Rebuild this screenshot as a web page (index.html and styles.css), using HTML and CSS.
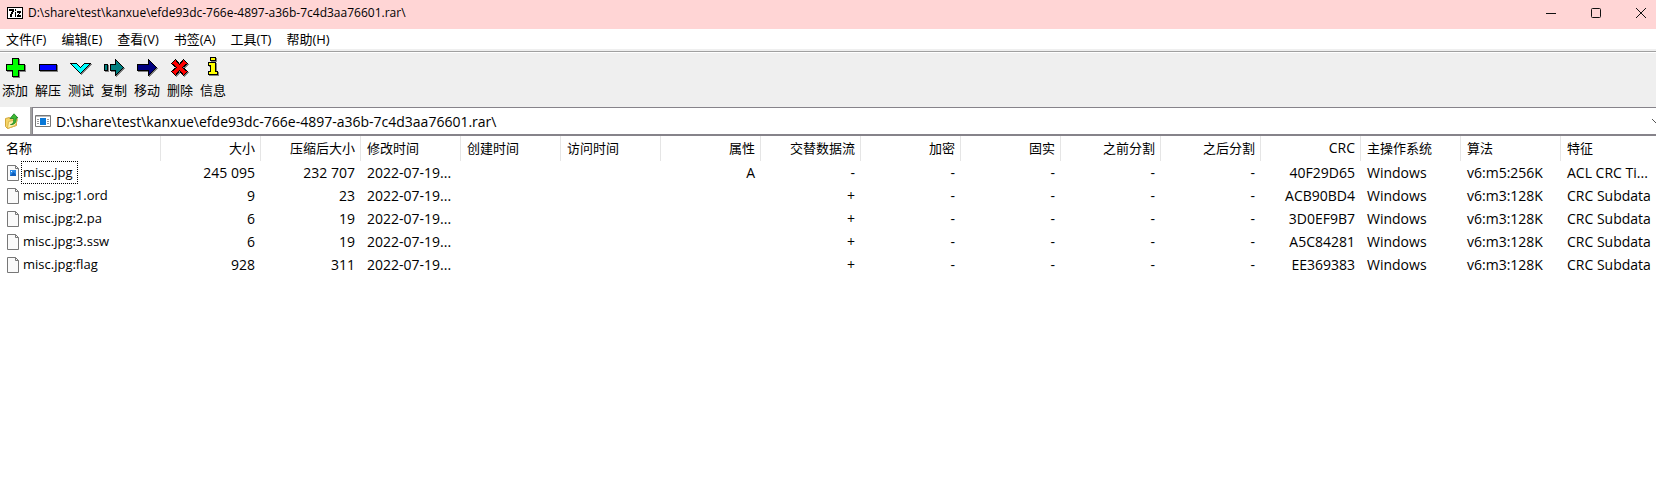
FILE: index.html
```html
<!DOCTYPE html>
<html lang="zh-CN">
<head>
<meta charset="utf-8">
<title>D:\share\test\kanxue\efde93dc-766e-4897-a36b-7c4d3aa76601.rar\</title>
<link rel="stylesheet" href="styles.css">
</head>
<body>
<div class="window">
  <header class="titlebar">
    <svg class="app-icon" viewBox="0 0 16 12" aria-hidden="true">
      <path d="M0 0h16v12H0z"/>
      <path d="M1 1h14v10H1z" fill="#fff"/>
      <path d="M2 2h5v3H6v2H5v3H3V7h1V5h1V4H2zM8 2h1v2H8zM8 5h1v5H8zM10 4h4v2h-1v1h-1v1h2v2h-4V8h1V7h1V6h-2z"/>
    </svg>
    <h1 class="title">D:\share\test\kanxue\efde93dc-766e-4897-a36b-7c4d3aa76601.rar\</h1>
    <div class="window-controls">
      <button class="control" aria-label="最小化"><svg viewBox="0 0 12 12"><path d="M1 6.500h10"/></svg></button>
      <button class="control" aria-label="最大化"><svg viewBox="0 0 12 12"><rect x="1.500" y="1.500" width="9" height="9" rx="1"/></svg></button>
      <button class="control" aria-label="关闭"><svg viewBox="0 0 12 12"><path d="M1 1l10 10M11 1L1 11"/></svg></button>
    </div>
  </header>
  <nav class="menubar">
    <button>文件(F)</button>
    <button>编辑(E)</button>
    <button>查看(V)</button>
    <button>书签(A)</button>
    <button>工具(T)</button>
    <button>帮助(H)</button>
  </nav>
  <div class="toolbar">
    <button><svg viewBox="0 0 24 24"><path class="shade" d="M10.500 3.500h6v6h6v6h-6v6h-6v-6h-6v-6h6z"/><path fill="#0f0" d="M9.500 2.500h6v6h6v6h-6v6h-6v-6h-6v-6h6z"/></svg>添加</button>
    <button><svg viewBox="0 0 24 24"><path class="shade" d="M4.500 9.500h17v6h-17z"/><path fill="#00f" d="M3.500 8.500h17v6h-17z"/></svg>解压</button>
    <button><svg viewBox="0 0 24 24"><path class="shade" d="M2.500 8.500h6l4 4 4-4h6l-10 10z"/><path fill="#0ff" d="M1.500 7.500h6l4 4 4-4h6l-10 10z"/></svg>测试</button>
    <button><svg viewBox="0 0 24 24"><path class="shade" d="M3.500 9.500h3v6h-3zM9.500 9.500h5v-5l8 8-8 8v-5h-5z"/><path fill="#008080" d="M2.500 8.500h3v6h-3zM8.500 8.500h5v-5l8 8-8 8v-5h-5z"/></svg>复制</button>
    <button><svg viewBox="0 0 24 24"><path class="shade" d="M3.500 9.500h11v-5l8 8-8 8v-5h-11z"/><path fill="#000080" d="M2.500 8.500h11v-5l8 8-8 8v-5h-11z"/></svg>移动</button>
    <button><svg viewBox="0 0 24 24"><path class="shade" d="M8.500 4.500l4 5 4-5 4 4-5 4 5 4-4 4-4-5-4 5-4-4 5-4-5-4z"/><path fill="#f00" d="M7.500 3.500l4 5 4-5 4 4-5 4 5 4-4 4-4-5-4 5-4-4 5-4-5-4z"/></svg>删除</button>
    <button><svg viewBox="0 0 24 24"><path class="shade" d="M10.500 2.500h5v3h-5zM8.500 7.500h7v9h2v3h-9v-3h2v-6h-2z"/><path fill="#ff0" d="M9.500 1.500h5v3h-5zM7.500 6.500h7v9h2v3h-9v-3h2v-6h-2z"/></svg>信息</button>
  </div>
  <div class="addressbar">
    <button class="up" aria-label="上一级">
      <svg viewBox="0 0 16 16"><path d="M1.500 5.500l4-1 1 1.500 6-1.500v8l-9 3-2-2z" fill="#f5d568" stroke="#d2a63a"/><path d="M4.500 8.500l9-2-2 6-8 3z" fill="#fff0a8" stroke="#dcb549"/><path d="M6.500 11.500c3-.5 3.500-3 3-6H6L10 .8 14 5h-2c.8 4-1.500 7-5.500 6.500z" fill="#3cb932" stroke="#1c7f22" stroke-width=".8"/></svg>
    </button>
    <label class="location">
      <svg viewBox="0 0 16 12" aria-hidden="true"><path d="M.5.5h15v11H.5z" fill="#fff" stroke="#777"/><path d="M1 1.500h14" stroke="#bbb"/><path d="M5 3h6v7H5z" fill="#0878d8"/><path d="M2 4.500h2M2 6.500h2M2 8.500h2M12 4.500h2M12 6.500h2M12 8.500h2" stroke="#999"/></svg>
      <input type="text" aria-label="地址" value="D:\share\test\kanxue\efde93dc-766e-4897-a36b-7c4d3aa76601.rar\">
    </label>
    <button class="drop" aria-label="历史"><svg viewBox="0 0 10 6"><path d="M1 1l4 4 4-4"/></svg></button>
  </div>
  <main class="files">
    <table>
      <colgroup><col class="name-col"><col span="15" class="data-col"></colgroup>
      <thead>
        <tr><th>名称</th><th class="num">大小</th><th class="num">压缩后大小</th><th>修改时间</th><th>创建时间</th><th>访问时间</th><th class="num">属性</th><th class="num">交替数据流</th><th class="num">加密</th><th class="num">固实</th><th class="num">之前分割</th><th class="num">之后分割</th><th class="num latin">CRC</th><th>主操作系统</th><th>算法</th><th>特征</th></tr>
      </thead>
      <tbody>
        <tr><td><div class="file"><svg viewBox="0 0 12 16"><path d="M.5.5h8l3 3v12H.5z" fill="#fafafa" stroke="#777"/><path d="M8.500.5v3h3" fill="none" stroke="#777"/><path d="M3 5h6v6H3z" fill="#2b8ae6"/><path d="M3 11l3.500-4L9 9.500V11z" fill="#0f5cb8"/><path d="M4 6h1v1H4z" fill="#fff"/></svg><span class="focused">misc.jpg</span></div></td><td class="num">245 095</td><td class="num">232 707</td><td>2022-07-19...</td><td></td><td></td><td class="num">A</td><td class="num">-</td><td class="num">-</td><td class="num">-</td><td class="num">-</td><td class="num">-</td><td class="num">40F29D65</td><td>Windows</td><td>v6:m5:256K</td><td>ACL CRC Ti...</td></tr>
        <tr><td><div class="file"><svg viewBox="0 0 12 16"><path d="M.5.5h8l3 3v12H.5z" fill="#fafafa" stroke="#777"/><path d="M8.500.5v3h3" fill="none" stroke="#777"/></svg><span>misc.jpg:1.ord</span></div></td><td class="num">9</td><td class="num">23</td><td>2022-07-19...</td><td></td><td></td><td></td><td class="num">+</td><td class="num">-</td><td class="num">-</td><td class="num">-</td><td class="num">-</td><td class="num">ACB90BD4</td><td>Windows</td><td>v6:m3:128K</td><td>CRC Subdata</td></tr>
        <tr><td><div class="file"><svg viewBox="0 0 12 16"><path d="M.5.5h8l3 3v12H.5z" fill="#fafafa" stroke="#777"/><path d="M8.500.5v3h3" fill="none" stroke="#777"/></svg><span>misc.jpg:2.pa</span></div></td><td class="num">6</td><td class="num">19</td><td>2022-07-19...</td><td></td><td></td><td></td><td class="num">+</td><td class="num">-</td><td class="num">-</td><td class="num">-</td><td class="num">-</td><td class="num">3D0EF9B7</td><td>Windows</td><td>v6:m3:128K</td><td>CRC Subdata</td></tr>
        <tr><td><div class="file"><svg viewBox="0 0 12 16"><path d="M.5.5h8l3 3v12H.5z" fill="#fafafa" stroke="#777"/><path d="M8.500.5v3h3" fill="none" stroke="#777"/></svg><span>misc.jpg:3.ssw</span></div></td><td class="num">6</td><td class="num">19</td><td>2022-07-19...</td><td></td><td></td><td></td><td class="num">+</td><td class="num">-</td><td class="num">-</td><td class="num">-</td><td class="num">-</td><td class="num">A5C84281</td><td>Windows</td><td>v6:m3:128K</td><td>CRC Subdata</td></tr>
        <tr><td><div class="file"><svg viewBox="0 0 12 16"><path d="M.5.5h8l3 3v12H.5z" fill="#fafafa" stroke="#777"/><path d="M8.500.5v3h3" fill="none" stroke="#777"/></svg><span>misc.jpg:flag</span></div></td><td class="num">928</td><td class="num">311</td><td>2022-07-19...</td><td></td><td></td><td></td><td class="num">+</td><td class="num">-</td><td class="num">-</td><td class="num">-</td><td class="num">-</td><td class="num">EE369383</td><td>Windows</td><td>v6:m3:128K</td><td>CRC Subdata</td></tr>
      </tbody>
    </table>
  </main>
</div>
</body>
</html>
```

FILE: styles.css
```css
* { box-sizing: border-box; }
body {
  margin: 0;
  background: #fff;
  color: #000;
  font: 13px "Open Sans", "Noto Sans CJK SC", sans-serif;
}
button {
  margin: 0;
  padding: 0;
  border: 0;
  background: none;
  color: inherit;
  font: inherit;
}
svg { display: block; flex: none; }
.window { display: flex; flex-direction: column; min-height: 100vh; overflow: hidden; }

.titlebar { display: flex; align-items: center; height: 29px; padding: 0 0 3px 7px; background: #ffd5d5; }
.app-icon { width: 16px; height: 12px; shape-rendering: crispEdges; }
.title { flex: 1; margin: 0 0 0 5px; font-size: 12px; font-weight: 400; line-height: 18px; }
.window-controls { display: flex; }
.control { display: flex; align-items: center; justify-content: center; width: 45px; height: 26px; }
.control:last-child { width: 30px; margin-left: 8px; }
.control svg { width: 12px; height: 12px; fill: none; stroke: #111; }

.menubar { display: flex; align-items: center; gap: 15px; height: 20px; padding-left: 6px; line-height: 20px; }

.toolbar {
  display: flex;
  align-items: flex-start;
  gap: 7px;
  height: 58px;
  padding: 3px 2px 0;
  background: linear-gradient(#efefef 2px, #a0a0a0 2px, #a0a0a0 3px, #fff 3px, #fff 4px, #efefef 4px);
}
.toolbar button { display: flex; flex-direction: column; align-items: center; width: 26px; padding-top: 4px; line-height: 20px; white-space: nowrap; }
.toolbar svg { width: 24px; height: 24px; shape-rendering: crispEdges; stroke: #000; }
.toolbar .shade { fill: #808080; stroke: #808080; }

.addressbar { display: flex; height: 29px; border-bottom: 2px solid #86838a; background: #fff; }
.up { display: flex; align-items: center; width: 32px; padding-left: 4px; border-right: 2px solid #a0a0a0; }
.up svg { width: 16px; height: 16px; }
.location { display: flex; flex: 1; align-items: center; gap: 5px; padding-left: 2px; border-top: 1px solid #86838a; border-left: 1px solid #86838a; }
.location svg { width: 16px; height: 12px; }
.location input { flex: 1; min-width: 0; padding: 2px 0 0; border: 0; outline: 0; background: none; font: 14px/22px "Open Sans", "Noto Sans CJK SC", sans-serif; color: #000; }
.drop { display: flex; align-items: center; width: 5px; border-top: 1px solid #86838a; overflow: hidden; }
.drop svg { width: 10px; height: 6px; fill: none; stroke: #555; }

.files { flex: 1; overflow: hidden; }
table { width: 1661px; table-layout: fixed; border-collapse: separate; border-spacing: 0; }
.name-col { width: 161px; }
.data-col { width: 100px; }
th, td { padding: 0 6px; text-align: left; font-weight: 400; white-space: nowrap; }
th { height: 25px; padding-bottom: 2px; border-right: 1px solid #e5e5e5; line-height: 20px; }
td { height: 23px; font-size: 14px; line-height: 21px; }
th.num { padding-right: 5px; }
.num { text-align: right; }
.latin { font-size: 14px; }
.file { display: flex; align-items: center; gap: 2px; padding-left: 1px; font-size: 13px; }
.file svg { width: 12px; height: 16px; }
.file span { padding: 0 5px 0 1px; border: 1px solid transparent; line-height: 21px; }
.file .focused { border: 1px dotted #000; }
```
